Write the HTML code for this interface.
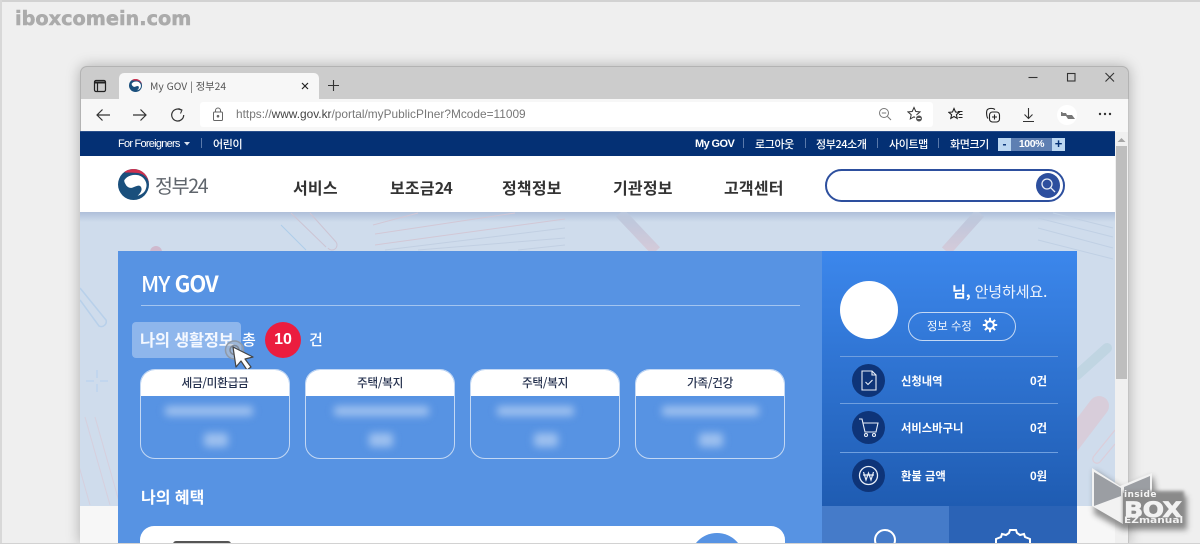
<!DOCTYPE html>
<html lang="ko"><head><meta charset="utf-8"><title>My GOV | 정부24</title>
<style>
*{box-sizing:border-box}
html,body{margin:0;padding:0;width:1200px;height:544px;overflow:hidden}
body{background:#efefef;font-family:"Liberation Sans","Noto Sans CJK KR",sans-serif}
#w{position:relative;width:1200px;height:544px;overflow:hidden;background:#efefef}
.a{position:absolute;white-space:nowrap}
.k{font-family:"Noto Sans CJK KR","Liberation Sans",sans-serif}
.navt{color:#fff;font-size:11px;font-weight:500;letter-spacing:-.4px;line-height:14px;top:137px}
.sep{position:absolute;top:138px;width:1px;height:10px;background:#5a79ab}
.menu{color:#333;font-size:16px;font-weight:700;line-height:22px;top:176px;letter-spacing:.2px}
.card{position:absolute;top:369px;width:150px;height:90px;border:1px solid #c3d8f4;border-radius:15px;overflow:hidden}
.card .h{height:26px;background:#fff;color:#26324f;font-size:11.7px;font-weight:500;text-align:center;line-height:25px;letter-spacing:-.3px}
.bl{position:absolute;background:#9dc0ef;filter:blur(4px);border-radius:3px}
.row{color:#fff;font-size:11.300px;font-weight:700;line-height:14px}
.ic{position:absolute;left:852px;width:33px;height:33px;border-radius:50%;background:#0e3478}
.hr{position:absolute;left:840px;width:218px;height:1px;background:#6f9fdf}
</style></head><body><div id="w">
<div class="a" style="left:0;top:0;width:1200px;height:2px;background:#d2d2d2"></div>
<div class="a" style="left:0;top:0;width:2px;height:544px;background:#d8d8d8"></div>
<div class="a" style="left:15px;top:7px;font-family:'DejaVu Sans',sans-serif;font-size:19.300px;font-weight:700;color:#ababab;line-height:24px;-webkit-text-stroke:.5px #ababab">iboxcomein.com</div>

<!-- window -->
<div class="a" style="left:80px;top:66px;width:1049px;height:478px;border-radius:7px 7px 0 0;background:#ccc;box-shadow:0 0 14px rgba(0,0,0,.28);border:1px solid #b3b3b3;border-bottom:0;overflow:hidden"></div>
<svg class="a" style="left:93px;top:79px" width="14" height="14" viewBox="0 0 14 14" fill="none" stroke="#222" stroke-width="1.200"><rect x="1.500" y="1.500" width="11" height="11" rx="1.500"/><path d="M1.500 3.500h11" stroke-width="2"/><path d="M4.500 4v8.500"/></svg>
<div class="a" style="left:119px;top:73px;width:200px;height:26px;background:#f7f7f7;border-radius:5px 5px 0 0"></div>
<svg class="a" style="left:129px;top:79px" width="13" height="13" viewBox="0 0 30 30"><circle cx="15" cy="15" r="15" fill="#1a4f7c"/><path d="M6 3A15 15 0 0 1 30 15C30 10 26 5 20 4 14 3 9 4 6 3z" fill="#d0314e"/><path d="M6 11C9 6 15 5 20 6c6 2 9 8 7 13-1 4-5 6-8 7 3-3 5-6 3-9-2-2-5 0-8 1-3 1-5-1-6-2-1-2-2-3-2-5z" fill="#fff"/></svg>
<div class="a k" style="left:150px;top:78px;font-size:10.300px;color:#555;line-height:15px">My GOV | 정부24</div>
<svg class="a" style="left:300px;top:81px" width="10" height="10" viewBox="0 0 10 10" stroke="#222" stroke-width="1.200"><path d="M2 2l6 6M8 2l-6 6"/></svg>
<svg class="a" style="left:327px;top:79px" width="13" height="13" viewBox="0 0 13 13" stroke="#333" stroke-width="1.100"><path d="M6.500 1v11M1 6.500h11"/></svg>
<svg class="a" style="left:1028px;top:71px" width="90" height="14" viewBox="0 0 90 14" fill="none" stroke="#333" stroke-width="1.100"><path d="M.5 6.500h9"/><rect x="39.500" y="2.500" width="7.500" height="7.500"/><path d="M77.500 2l8.500 8.500M86 2l-8.500 8.500"/></svg>

<!-- toolbar -->
<div class="a" style="left:81px;top:99px;width:1047px;height:33px;background:#f7f7f7"></div>
<svg class="a" style="left:94px;top:106px" width="100" height="16" viewBox="0 0 100 16" fill="none" stroke="#333" stroke-width="1.200"><path d="M3 9h13M8.500 3.500L3 9l5.500 5.500"/><path d="M39 9h13M46.500 3.500L52 9l-5.500 5.500"/><path d="M87 4a6 6 0 1 0 2.700 5"/><path d="M84.500 2.500l3.500 1.500-1.500 3.500" stroke-width="1"/></svg>
<div class="a" style="left:200px;top:102px;width:733px;height:25px;background:#fff;border-radius:3px"></div>
<svg class="a" style="left:212px;top:107px" width="12" height="15" viewBox="0 0 12 15" fill="none" stroke="#666" stroke-width="1"><rect x="1.500" y="5" width="9" height="8.500" rx="1"/><path d="M3.500 5V3.500a2.500 2.500 0 0 1 5 0V5"/><circle cx="6" cy="9.200" r=".8" fill="#666"/></svg>
<div class="a" style="left:236px;top:107px;font-size:11.880px;line-height:15px;color:#777">https://<span style="color:#444">www.gov.kr</span>/portal/myPublicPIner?Mcode=11009</div>
<svg class="a" style="left:878px;top:107px" width="14" height="14" viewBox="0 0 14 14" fill="none" stroke="#777" stroke-width="1"><circle cx="6" cy="6" r="4.500"/><path d="M9.500 9.500l3.500 3.500M3.800 6h4.400"/></svg>
<svg class="a" style="left:907px;top:106px" width="16" height="17" viewBox="0 0 16 17" fill="none" stroke="#333" stroke-width="1"><path d="M7 1.500l1.800 4 4.200.4-3.200 2.800.9 4.200L7 10.800l-3.700 2.100.9-4.200L1 5.900l4.200-.4z"/><circle cx="12" cy="12.500" r="3.500" fill="#555" stroke="#fff"/><path d="M10.300 12.500h3.400" stroke="#fff"/></svg>
<svg class="a" style="left:948px;top:107px" width="15" height="15" viewBox="0 0 15 15" fill="none" stroke="#222" stroke-width="1.100"><path d="M6 1.500l1.500 3.500 3.700.3-2.800 2.400.8 3.700L6 9.500l-3.200 1.900.8-3.700L.8 5.300l3.700-.3z"/><path d="M10 4.500h4.500M11 7.500h3.500M10.500 10.500h4"/></svg>
<svg class="a" style="left:985px;top:107px" width="16" height="16" viewBox="0 0 16 16" fill="none" stroke="#222" stroke-width="1.100"><path d="M3 11.500C1.500 10 1 4 2.500 2.500S8 1 10 2.500"/><rect x="4.500" y="5" width="10" height="10" rx="3"/><path d="M9.500 7.500v5M7 10h5"/></svg>
<svg class="a" style="left:1022px;top:107px" width="13" height="16" viewBox="0 0 13 16" fill="none" stroke="#333" stroke-width="1.100"><path d="M6.500 1v10M2.500 7.500l4 4 4-4M1 14.500h11"/></svg>
<div class="a" style="left:1057px;top:105px;width:20px;height:20px;border-radius:50%;background:#fff"></div>
<svg class="a" style="left:1060px;top:111px" width="16" height="9" viewBox="0 0 16 9"><path d="M1 1v4h5l2 3h7L12 4H7L6 2H3L2 1z" fill="#777"/></svg>
<svg class="a" style="left:1098px;top:112px" width="14" height="4" viewBox="0 0 14 4" fill="#333"><circle cx="2" cy="2" r="1.200"/><circle cx="7" cy="2" r="1.200"/><circle cx="12" cy="2" r="1.200"/></svg>

<!-- page -->
<div class="a" style="left:80px;top:131px;width:1035px;height:25px;background:#043074"></div>
<div class="a" style="left:80px;top:131px;width:1035px;height:1px;background:#2a4f8c"></div>
<div class="a" style="left:80px;top:156px;width:1035px;height:56px;background:#fff"></div>
<div class="a" style="left:80px;top:212px;width:1035px;height:294px;background:#cfdcec"></div>
<div class="a" style="left:80px;top:212px;width:1035px;height:10px;background:linear-gradient(#aebfd9,#cfdcec)"></div>
<div class="a" style="left:80px;top:506px;width:1035px;height:38px;background:#f7f7f7"></div>

<!-- hero decorations -->
<svg class="a" style="left:80px;top:212px" width="1035" height="294" viewBox="0 0 1035 294" fill="none">
<defs>
<linearGradient id="g1" gradientUnits="userSpaceOnUse" x1="0" y1="0" x2="0" y2="40"><stop offset="0" stop-color="#b9c7dd"/><stop offset="1" stop-color="#d5cad9"/></linearGradient>
</defs>
<path d="M0 76L26 108a5 5 0 0 1-7 6L0 88" stroke="#b8d0ea" stroke-width="1.500"/>
<path d="M6 169h8M20 169h8M17 158v8M17 172v8" stroke="#bdd4ef" stroke-width="1.500"/>
<path d="M5 205L30 293M15 205L40 293M-5 240L10 293" stroke="#d6cfdd" stroke-width="1"/>
<circle cx="76" cy="40" r="6" fill="#cfb9cd"/>
<path d="M211 1L246 35M230 1L256 30a5 5 0 0 1-8 6" stroke="#cdc4d3" stroke-width="1"/>
<path d="M201 13L226 38" stroke="#aecdea" stroke-width="1"/>
<path d="M293 13L338 1M295 22L435 1M295 33L485 7" stroke="#d2c7d5" stroke-width="1"/>
<path d="M305 38L485 16M338 38L485 26M438 38L485 33" stroke="#c1cfe2" stroke-width="1"/>
<path d="M540 1L576 39" stroke="url(#g1)" stroke-width="11"/>
<path d="M900 1L866 39" stroke="url(#g1)" stroke-width="11"/>
<path d="M973 1L1033 16M958 6L1033 25M958 16L1033 36M958 28L1033 47" stroke="#c0d0e4" stroke-width="1"/>
<path d="M1027 136L997 163" stroke="#c0d5e2" stroke-width="10" stroke-linecap="round"/>
<path d="M1019 194L990 232" stroke="#d8cdda" stroke-width="20" stroke-linecap="round"/>
<path d="M1035 218L1014 244a4 4 0 0 0 6 6L1035 232" stroke="#dccdd9" stroke-width="1.200"/>
</svg>

<!-- top nav -->
<div class="a navt" style="left:118px;letter-spacing:-.75px">For Foreigners</div>
<svg class="a" style="left:184px;top:142px" width="6" height="4"><path d="M0 0h6L3 3.500z" fill="#dbe3ef"/></svg>
<div class="sep" style="left:201px"></div>
<div class="a navt k" style="left:213px">어린이</div>
<div class="a navt" style="left:695px;letter-spacing:-.6px;font-weight:700">My GOV</div>
<div class="sep" style="left:743px"></div>
<div class="a navt k" style="left:755px">로그아웃</div>
<div class="sep" style="left:805px"></div>
<div class="a navt k" style="left:816px">정부24소개</div>
<div class="sep" style="left:877px"></div>
<div class="a navt k" style="left:889px">사이트맵</div>
<div class="sep" style="left:938px"></div>
<div class="a navt k" style="left:950px">화면크기</div>
<div class="a" style="left:998px;top:138px;width:13px;height:13px;background:#bcd7f1;color:#043074;font-size:12px;font-weight:700;text-align:center;line-height:12px">-</div>
<div class="a" style="left:1011px;top:138px;width:41px;height:13px;background:#5e7fb2;color:#fff;font-size:10.500px;font-weight:700;letter-spacing:-.4px;text-align:center;line-height:13px">100%</div>
<div class="a" style="left:1052px;top:138px;width:13px;height:13px;background:#bcd7f1;color:#043074;font-size:13px;font-weight:700;text-align:center;line-height:12px">+</div>

<!-- logo -->
<svg class="a" style="left:118px;top:169px" width="31" height="31" viewBox="0 0 30 30"><circle cx="15" cy="15" r="15" fill="#1a4f7c"/><path d="M6 3A15 15 0 0 1 30 15C30 10 26 5 20 4 14 3 9 4 6 3z" fill="#d0314e"/><path d="M6 11C9 6 15 5 20 6c6 2 9 8 7 13-1 4-5 6-8 7 3-3 5-6 3-9-2-2-5 0-8 1-3 1-5-1-6-2-1-2-2-3-2-5z" fill="#fff"/></svg>
<div class="a k" style="left:155px;top:171px;font-size:19.500px;letter-spacing:-1.300px;color:#5f656c;line-height:27px">정부24</div>

<div class="a menu k" style="left:293px">서비스</div>
<div class="a menu k" style="left:390px">보조금<span style="letter-spacing:-.8px">24</span></div>
<div class="a menu k" style="left:502px">정책정보</div>
<div class="a menu k" style="left:613px">기관정보</div>
<div class="a menu k" style="left:724px">고객센터</div>
<div class="a" style="left:825px;top:169px;width:240px;height:33px;border:2px solid #2d4f9e;border-radius:17px;background:#fff"></div>
<div class="a" style="left:1036px;top:173px;width:24px;height:25px;border-radius:50%;background:#2d4f9e"></div>
<svg class="a" style="left:1040px;top:177px" width="16" height="16" viewBox="0 0 16 16" fill="none" stroke="#e6ecf6" stroke-width="1.300"><circle cx="7" cy="7" r="5"/><path d="M10.700 10.700L15 15"/></svg>

<!-- left panel -->
<div class="a" style="left:118px;top:251px;width:704px;height:293px;background:#5793e3"></div>
<div class="a k" style="left:141px;top:268px;font-size:22px;font-weight:500;color:#fff;letter-spacing:-1px;line-height:30px">MY <b>GOV</b></div>
<div class="a" style="left:141px;top:305px;width:659px;height:1px;background:#a4c5f0"></div>
<div class="a" style="left:132px;top:322px;width:109px;height:36px;border-radius:4px;background:#8eb6ec"></div>
<div class="a k" style="left:140px;top:329px;font-size:16.400px;font-weight:700;color:#f4f8ff;line-height:21px;letter-spacing:-.2px">나의 생활정보</div>
<div class="a k" style="left:242px;top:329px;font-size:15px;font-weight:500;color:#fff;line-height:21px">총</div>
<div class="a" style="left:265px;top:322px;width:36px;height:36px;border-radius:50%;background:#eb1d3f;color:#fff;font-size:16px;font-weight:700;text-align:center;line-height:36px">10</div>
<div class="a k" style="left:309px;top:329px;font-size:15px;font-weight:500;color:#fff;line-height:21px">건</div>
<!-- cursor -->
<svg class="a" style="left:224px;top:339px" width="32" height="34" viewBox="0 0 32 34"><circle cx="10.500" cy="11" r="9" fill="#a9b6c6" fill-opacity=".55" stroke="#8f9aa8" stroke-width="1.500"/><circle cx="10.500" cy="11" r="4.500" fill="none" stroke="#7f8894" stroke-width="1.500"/><path d="M9 8l3 20 5-6 6 9 4-3-6-8 8-2z" fill="#fff" stroke="#444" stroke-width="1.200" stroke-linejoin="round"/></svg>

<div class="card" style="left:140px"><div class="h k">세금/미환급금</div></div>
<div class="card" style="left:305px"><div class="h k">주택/복지</div></div>
<div class="card" style="left:470px"><div class="h k">주택/복지</div></div>
<div class="card" style="left:635px"><div class="h k">가족/건강</div></div>
<div class="bl" style="left:165px;top:406px;width:88px;height:10px"></div><div class="bl" style="left:204px;top:433px;width:24px;height:14px"></div>
<div class="bl" style="left:334px;top:406px;width:95px;height:10px"></div><div class="bl" style="left:369px;top:433px;width:24px;height:14px"></div>
<div class="bl" style="left:497px;top:406px;width:77px;height:10px"></div><div class="bl" style="left:534px;top:433px;width:24px;height:14px"></div>
<div class="bl" style="left:662px;top:406px;width:97px;height:10px"></div><div class="bl" style="left:699px;top:433px;width:24px;height:14px"></div>

<div class="a k" style="left:141px;top:486px;font-size:16px;font-weight:700;color:#fff;line-height:21px">나의 혜택</div>
<div class="a" style="left:140px;top:526px;width:645px;height:18px;border-radius:14px 14px 0 0;background:#fff"></div>
<div class="a" style="left:173px;top:541px;width:58px;height:3px;border-radius:3px 3px 0 0;background:#555"></div>
<svg class="a" style="left:690px;top:533px" width="54" height="11" viewBox="0 0 54 11"><circle cx="27" cy="27" r="27" fill="#5793e3"/></svg>

<!-- right panel -->
<div class="a" style="left:822px;top:251px;width:255px;height:293px;background:linear-gradient(#3c87ec 0,#1f5cb2 255px)"></div>
<div class="a" style="left:840px;top:281px;width:58px;height:58px;border-radius:50%;background:#fff"></div>
<div class="a k" style="left:952px;top:281px;font-size:15px;font-weight:400;color:#eef4fd;line-height:21px;letter-spacing:-.1px"><b style="color:#fff">님,</b> 안녕하세요.</div>
<div class="a" style="left:908px;top:312px;width:108px;height:29px;border:1px solid #c3d8f4;border-radius:15px"></div>
<div class="a k" style="left:927px;top:319px;font-size:11.300px;color:#f1f6fd;line-height:15px">정보 수정</div>
<svg class="a" style="left:982px;top:317px" width="16" height="16" viewBox="0 0 16 16" fill="none" stroke="#fff"><circle cx="8" cy="8" r="3.800" stroke-width="2"/><path d="M8 .8v3M8 12.200v3M.8 8h3M12.200 8h3M2.900 2.900l2.100 2.100M11 11l2.100 2.100M13.100 2.900L11 5M5 11l-2.100 2.100" stroke-width="2"/></svg>
<div class="hr" style="top:356px"></div>
<div class="hr" style="top:403px"></div>
<div class="hr" style="top:452px"></div>
<div class="ic" style="top:364px"></div>
<svg class="a" style="left:860px;top:370px" width="18" height="21" viewBox="0 0 18 21" fill="none" stroke="#e8eef8" stroke-width="1.100"><path d="M2 1h10l4 4v15H2z"/><path d="M12 1v4h4M5.500 12l2.500 2.500 4.500-4.500"/></svg>
<div class="ic" style="top:411px"></div>
<svg class="a" style="left:858px;top:418px" width="21" height="20" viewBox="0 0 21 20" fill="none" stroke="#e8eef8" stroke-width="1.100"><path d="M1 1h3l3 13h11l2-9H5"/><circle cx="8" cy="17" r="1.500"/><circle cx="16" cy="17" r="1.500"/></svg>
<div class="ic" style="top:459px"></div>
<svg class="a" style="left:858px;top:465px" width="21" height="21" viewBox="0 0 21 21" fill="none" stroke="#e8eef8"><circle cx="10.500" cy="10.500" r="9" stroke-width="1.300"/><path d="M5.500 7l2.500 8 2.500-7 2.500 7 2.500-8M5 10h11" stroke-width="1.200"/></svg>
<div class="a row k" style="left:901px;top:374px">신청내역</div><div class="a row k" style="left:1030px;top:374px">0건</div>
<div class="a row k" style="left:901px;top:421px">서비스바구니</div><div class="a row k" style="left:1030px;top:421px">0건</div>
<div class="a row k" style="left:901px;top:469px">환불 금액</div><div class="a row k" style="left:1030px;top:469px">0원</div>
<div class="a" style="left:822px;top:506px;width:127px;height:38px;background:#457bc9"></div>
<div class="a" style="left:949px;top:506px;width:128px;height:38px;background:#2b63b6"></div>
<svg class="a" style="left:870px;top:526px" width="30" height="18" viewBox="0 0 30 18" fill="none" stroke="#fff" stroke-width="2"><circle cx="15" cy="14" r="10"/></svg>
<svg class="a" style="left:994px;top:529px" width="38" height="15" viewBox="0 0 38 15" fill="none" stroke="#fff" stroke-width="2"><path d="M2 15V10l5-2 1-3 4 1 3-2 1-3h6l1 3 3 2 4-1 1 3 5 2v5"/></svg>

<!-- scrollbar -->
<div class="a" style="left:1115px;top:132px;width:13px;height:412px;background:#f0f0f0"></div>
<svg class="a" style="left:1117px;top:137px" width="9" height="6"><path d="M4.500 1L8.500 5H.5z" fill="#a5a5a5"/></svg>
<div class="a" style="left:1116px;top:146px;width:11px;height:233px;background:#bebebe"></div>
<div class="a" style="left:1128px;top:99px;width:1px;height:445px;background:#c4c4c4"></div>

<!-- insideBOX logo -->
<svg class="a" style="left:1085px;top:460px" width="115" height="84" viewBox="0 0 115 84"><defs><filter id="s" x="-20%" y="-20%" width="140%" height="140%"><feGaussianBlur stdDeviation="3"/></filter></defs>
<path d="M9 10l29 19 30-13 4 20h30v34H38L9 54z" fill="#333" opacity=".5" filter="url(#s)"/>
<path d="M7 8l28 18 32-13v20H38v31L7 46z" fill="#f2f2f2"/>
<path d="M9 12l27 16v8L9 46z" fill="#9b9ea3"/>
<path d="M39 27l26-11v17H39z" fill="#9b9ea3"/>
</svg>
<div class="a" style="left:1123px;top:491px;width:61px;height:34px;background:#8a8a8a;filter:blur(1.500px)"></div>
<div class="a" style="left:1124px;top:490px;font-family:'DejaVu Sans',sans-serif;font-size:9px;font-weight:700;color:#f4f4f4;line-height:11px;letter-spacing:.4px">inside</div>
<div class="a" style="left:1124px;top:498px;font-family:'DejaVu Sans',sans-serif;font-size:21px;font-weight:700;color:#f2f2f2;line-height:24px;letter-spacing:-.5px;-webkit-text-stroke:.7px #f2f2f2;transform:scaleX(1.200);transform-origin:0 0">BOX</div>
<div class="a" style="left:1124px;top:516px;font-family:'DejaVu Sans',sans-serif;font-size:8.500px;font-weight:700;color:#f2f2f2;line-height:11px;transform:scaleX(1.250);transform-origin:0 0">EZmanual</div>
<div class="a" style="left:0;top:543px;width:1200px;height:1px;background:#d2d2d2"></div>
</div></body></html>
